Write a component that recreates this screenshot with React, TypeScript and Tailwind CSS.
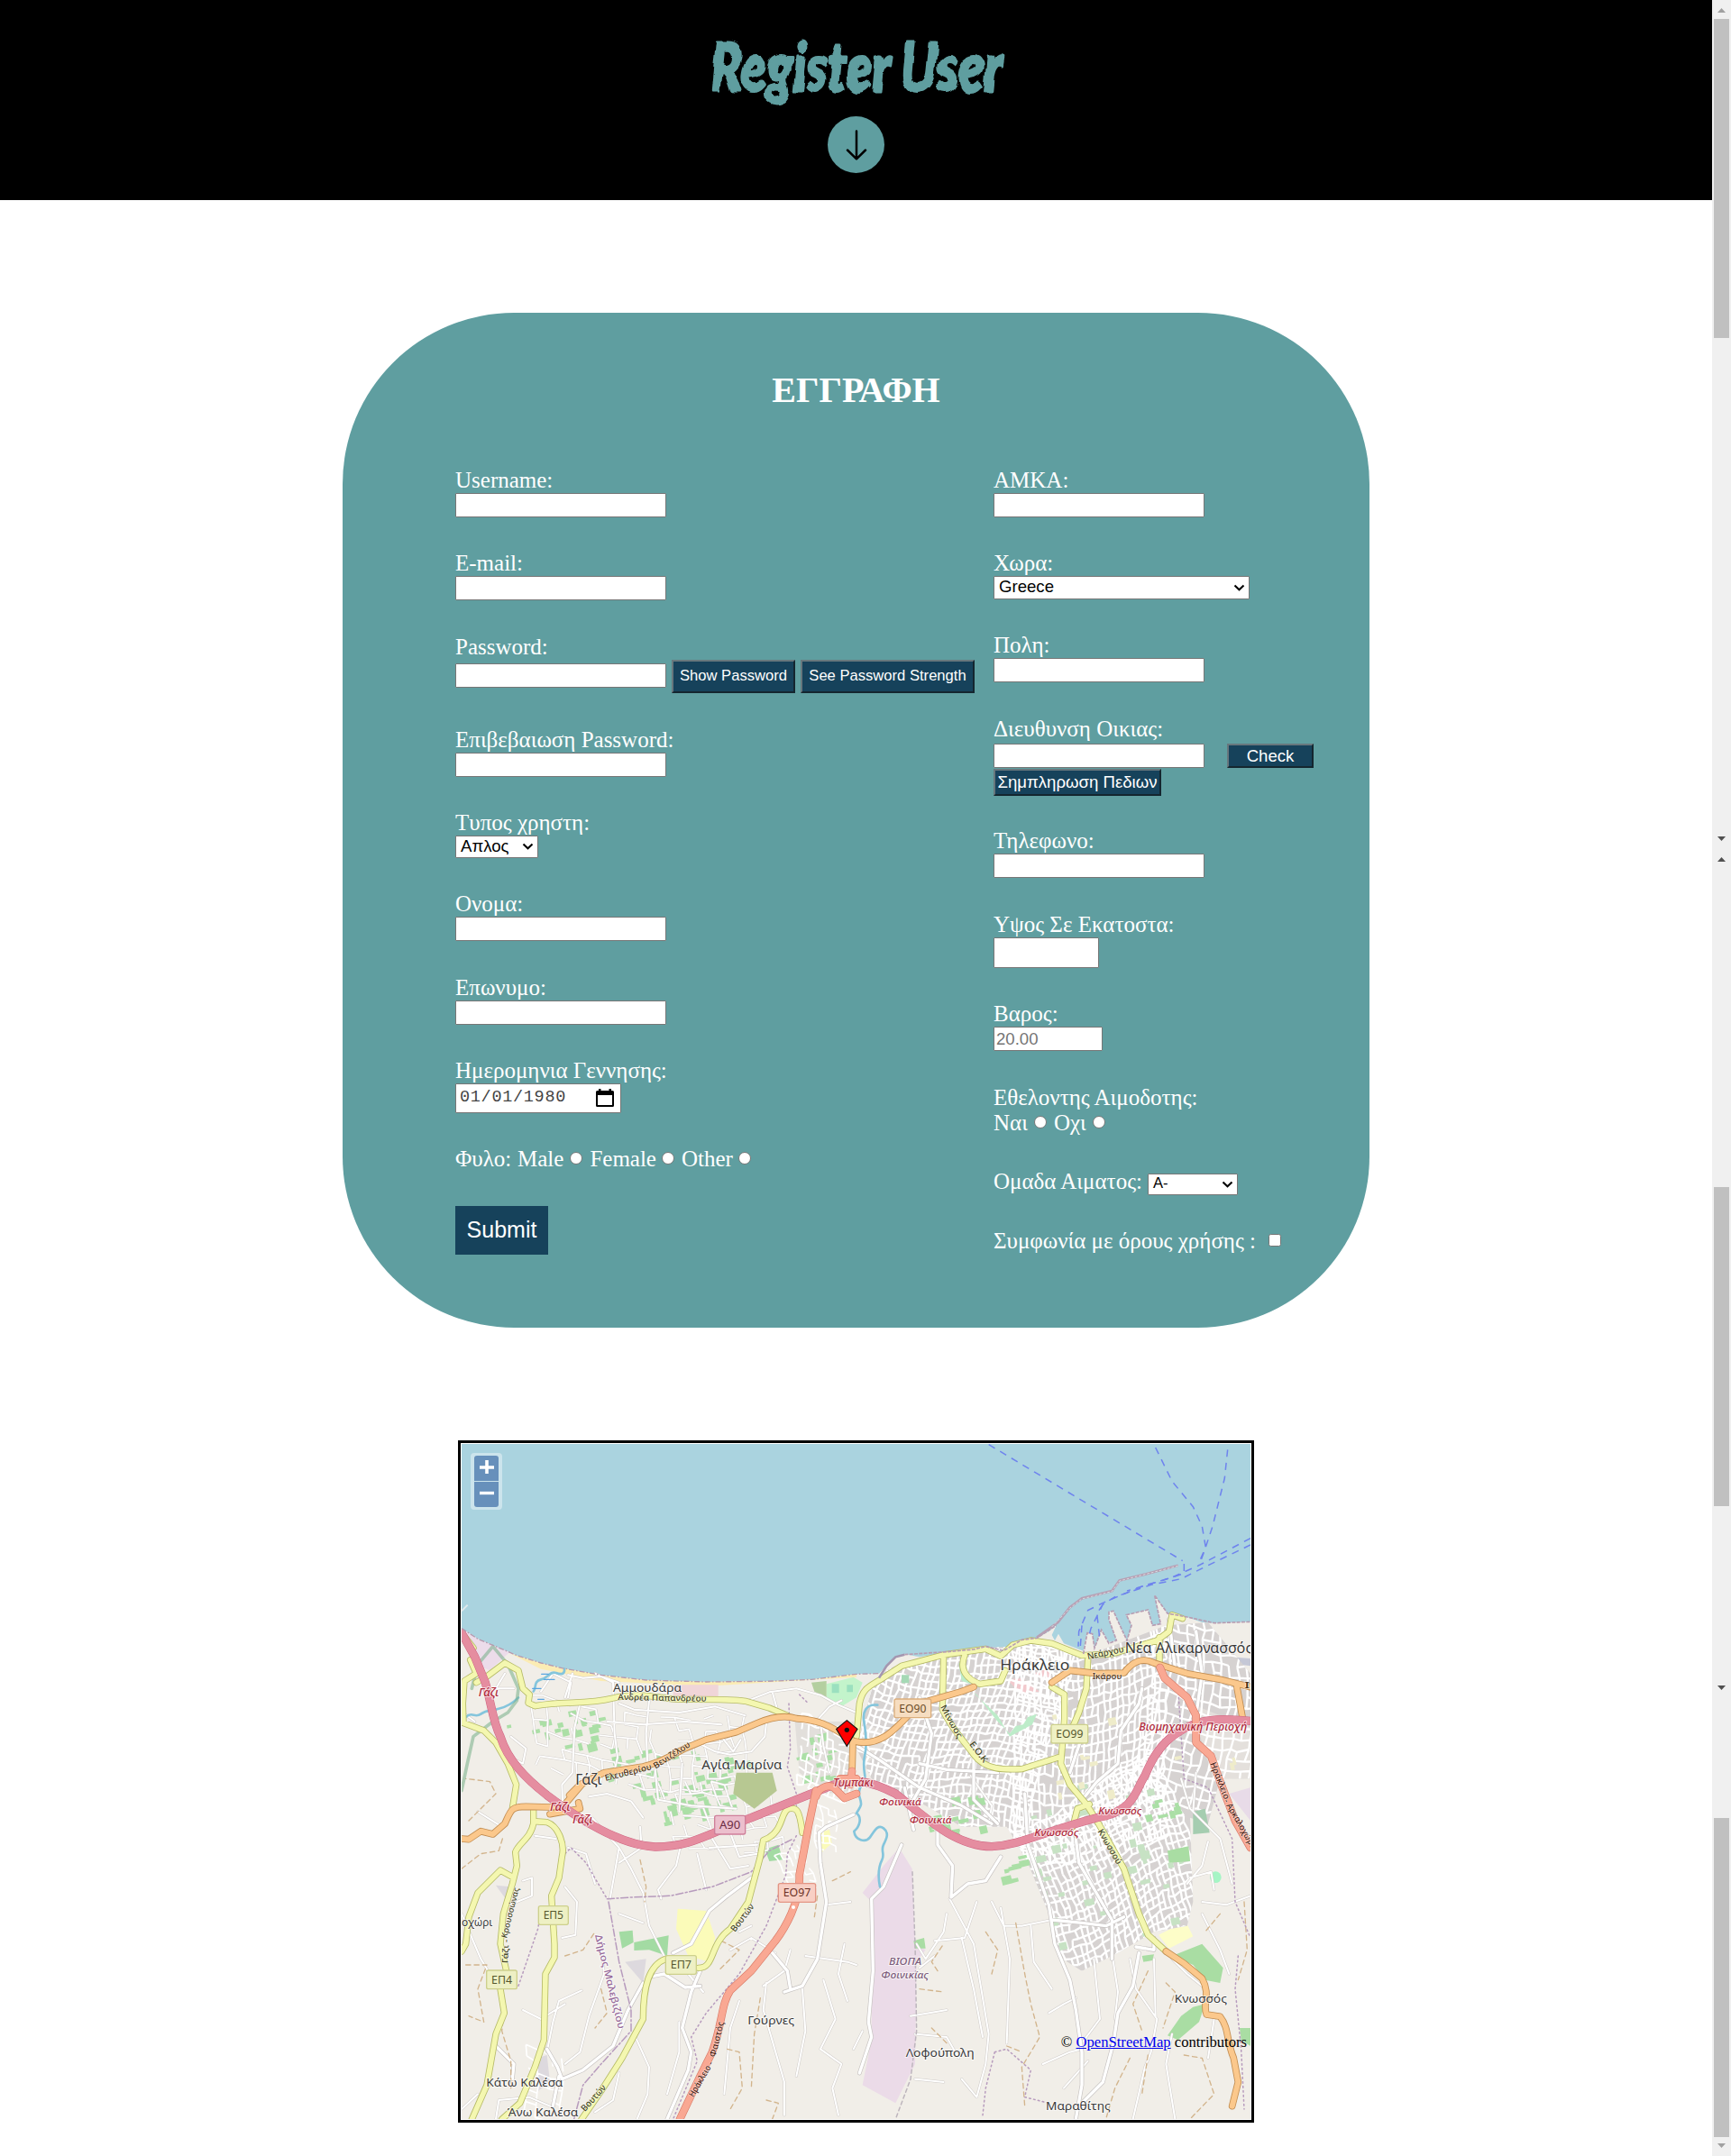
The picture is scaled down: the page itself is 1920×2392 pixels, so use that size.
import React from 'react';

/* ---------- form controls ---------- */

const Label = ({ children }: { children: React.ReactNode }) => (
  <label className="block h-7 whitespace-pre text-[25px] leading-7 text-white">{children}</label>
);

const TextBox = ({ size = 'h-[27px] w-[234px]', placeholder = '' }: { size?: string; placeholder?: string }) => (
  <input
    placeholder={placeholder}
    className={`block shrink-0 rounded-[1px] border border-[#767676] bg-white px-[2px] font-['Liberation_Sans',sans-serif] text-[18.6px] text-black outline-none placeholder:text-[#757575] placeholder:opacity-100 ${size}`}
  />
);

const SelectBox = ({ value, size }: { value: string; size: string }) => (
  <button
    type="button"
    aria-haspopup="listbox"
    className={`flex shrink-0 items-center justify-between rounded-[1px] border border-[#767676] bg-white pr-[4px] pl-[5px] font-['Liberation_Sans',sans-serif] text-black ${size}`}
  >
    <span className="-mt-[2px] leading-[22px] whitespace-nowrap">{value}</span>
    <svg className="h-[9px] w-[13px] shrink-0" viewBox="0 0 13 9" fill="none">
      <path d="M1.5 1.5 6.5 6.3 11.5 1.5" stroke="#000" strokeWidth="2.1" />
    </svg>
  </button>
);

const NavyButton = ({ children, size }: { children: React.ReactNode; size: string }) => (
  <button
    className={`flex shrink-0 items-center justify-center border-2 border-t-[#67777d] border-r-[#14262f] border-b-[#14262f] border-l-[#67777d] bg-[#16425b] font-['Liberation_Sans',sans-serif] whitespace-nowrap text-white ${size}`}
  >
    {children}
  </button>
);

const Radio = ({ name, gap }: { name: string; gap: string }) => (
  <input
    type="radio"
    name={name}
    className={`block h-[14px] w-[14px] shrink-0 appearance-none rounded-full border border-[#767676] bg-white ${gap}`}
  />
);

/* ---------- map helpers ---------- */

function makeRandom(seed: number) {
  let s = seed;
  return () => {
    s = (s * 16807) % 2147483647;
    return s / 2147483647;
  };
}

/* Jittered street grid around a centre point, turned by an angle. */
function streets(cx: number, cy: number, w: number, h: number, deg: number, sx: number, sy: number, seed: number, drop: number) {
  const rnd = makeRandom(seed);
  const a = (deg * Math.PI) / 180;
  const cols = Math.round(w / sx);
  const rows = Math.round(h / sy);
  const pt: string[][] = [];
  for (let r = 0; r <= rows; r++) {
    pt.push([]);
    for (let c = 0; c <= cols; c++) {
      const x = -w / 2 + c * sx + (rnd() - 0.5) * sx * 0.4 + Math.sin(r / 5) * sx * 0.9;
      const y = -h / 2 + r * sy + (rnd() - 0.5) * sy * 0.4 + Math.sin(c / 6) * sy * 1.3;
      pt[r].push(`${(cx + x * Math.cos(a) - y * Math.sin(a)).toFixed(0)} ${(cy + x * Math.sin(a) + y * Math.cos(a)).toFixed(0)}`);
    }
  }
  let d = '';
  for (let r = 0; r <= rows; r++) {
    for (let c = 0; c <= cols; c++) {
      if (c < cols && rnd() > drop) d += `M${pt[r][c]}L${pt[r][c + 1]}`;
      if (r < rows && rnd() > drop) d += `M${pt[r][c]}L${pt[r + 1][c]}`;
    }
  }
  return d;
}

function patches(x0: number, y0: number, w: number, h: number, n: number, seed: number) {
  const rnd = makeRandom(seed);
  let d = '';
  for (let i = 0; i < n; i++) {
    const x = x0 + rnd() * w;
    const y = y0 + rnd() * h;
    const a = 10 + rnd() * 24;
    const b = 8 + rnd() * 20;
    d += `M${x.toFixed(0)} ${y.toFixed(0)}l${a.toFixed(0)} ${(-a / 5).toFixed(0)} ${(b / 4).toFixed(0)} ${b.toFixed(0)} ${(-a).toFixed(0)} ${(a / 4).toFixed(0)}z`;
  }
  return d;
}

const LAND =
  'M36 650 90 685 150 710 220 740 300 765 370 782 500 805 650 822 850 828 1050 826 1200 820 1350 802 1425 800 1450 775 1480 745 1510 735 1560 745 1650 730 1700 718 1740 722 1780 710 1840 724 1860 700 1900 688 1950 682 1990 660 2015 640 2000 672 2010 690 2022 668 2040 700 2105 725 2118 665 2135 668 2142 715 2165 655 2190 695 2215 690 2190 620 2190 595 2205 592 2222 630 2250 690 2265 640 2248 605 2320 588 2335 640 2362 635 2342 540 2385 600 2450 612 2500 630 2540 632 2661 628 2661 2284 36 2284Z';

const CITY =
  'M1400 850 1450 790 1500 765 1640 735 1780 715 1860 710 1950 690 2105 745 2380 640 2520 630 2661 800 2661 1150 2560 1150 2520 1300 2460 1280 2470 1560 2450 1640 2340 1660 2220 1730 2100 1790 2020 1740 1990 1600 1920 1430 1850 1310 1700 1310 1580 1240 1400 1150 1350 1050Z';

const MINOR = [
  'M480 800 540 830 545 1000 555 1080 545 1120M660 890 650 1000 655 1100M430 900 412 980 405 1130 370 1170 372 1230',
  'M405 800 380 880M390 805 440 815 500 810 560 830M300 860 340 800 400 830 390 880M560 900 610 920 760 930 880 910 980 940M520 960 640 970 780 960 900 970',
  'M990 890 1060 862 1150 850 1230 872 1290 905 1350 930M1070 862 1085 915M1230 965 1240 1040 1260 1130M1215 960 1260 910 1300 890',
  'M830 1035 880 1060 930 1070 1000 1060 1045 1010 1050 965M900 1010 940 1060 965 1020M770 1100 760 1260M680 1120 690 1220 800 1240 950 1250',
  'M460 1210 520 1200 600 1225 640 1280M470 1280 560 1380 600 1450 640 1530 660 1640 710 1740M560 1380 530 1550M630 1310 635 1380 560 1430',
  'M40 930 80 960M180 800 150 850 210 850M200 1080 240 1100 250 1050 200 1010M90 1260 170 1310M280 1340 350 1350M390 1380 450 1400 480 1500M380 1510 420 1560 415 1670 370 1680',
  'M820 1400 850 1520M770 1350 750 1440 690 1520 700 1550M870 1350 930 1450 990 1440M930 1330 960 1410 1020 1400M860 1380 1020 1370',
  'M36 1600 70 1680 100 1750 130 1800M240 1490 270 1480 270 1540 220 1560M500 1700 510 1800 460 1940 430 2060 380 2100M435 1855 360 1890 340 1960 320 2060M240 1920 300 1950 380 1900M560 1600 640 1630',
  'M610 2000 660 2110 655 2200 620 2283M560 2130 540 2220 480 2260M790 1800 840 1860M760 1960 760 2060 720 2200M1000 1640 960 1660M930 1720 1000 1680 1080 1730M1040 1840 1110 1790 1130 1720',
  'M960 1890 930 1980 910 2200M1050 1830 1040 1920 1110 2160 1110 2270M1170 1850 1180 1990 1150 2140M1240 1820 1280 1950 1230 2050 1300 2100 1270 2180 1290 2270M1310 1700 1290 1800 1320 1890M1180 1740 1320 1760 1350 1770M1250 1570 1330 1560',
  'M1550 1700 1580 1750 1640 1660 1650 1600M1610 1690 1710 1680 1750 1560M1700 1680 1740 1850 1770 2010M1800 1560 1840 1640 1900 1640 2000 1620M1830 1580 1860 1750 1850 2030M1930 1640 1940 1760 2000 1850M1990 1930 2040 1900 2080 1880',
  'M1660 1550 1740 1700 1790 2000 1780 2100 1750 2210 1700 2150M1545 2000 1650 2010 1690 2080M1610 1740 1560 1780M1370 1990 1340 2050M1530 1940 1650 1920M1545 2150 1640 2160M2140 1750 2160 1950 2100 2030',
  'M2200 1730 2220 1860 2210 1950M2260 1750 2280 1850 2350 1950 2330 2060 2310 2110 2270 2283M2340 1750 2345 1940M2400 1750 2450 1800 2500 1840M2500 1600 2560 1720 2590 1800M2540 1950 2520 2080M2400 2000 2380 2100 2410 2283M1970 2100 2060 2060 2100 2050M2040 2180 2120 2090',
  'M1730 1140 1800 1240 1790 1300M2480 1130 2470 1260M2430 1150 2460 1250 2560 1350 2600 1500M2520 1360 2500 1440 2450 1500M2460 1480 2530 1460 2540 1520M2661 1540 2580 1570 2500 1560M36 2250 90 2200M150 2283 160 2220 260 2210 330 2240',
];

const MAJOR_WHITE = [
  'M830 1790 800 1860 770 1980 800 2060 790 2120 720 2283M660 1810 710 1800 780 1845 830 1840M740 1730 800 1700 860 1590 920 1540 1000 1480M320 2050 355 2110 370 2150 440 2120 540 2040 590 1920 640 1830',
  'M1340 1270 1250 1310 1225 1330 1230 1430 1250 1560 1220 1750 1170 1840 1110 1860M1070 1730 1120 1790 1130 1850M150 2040 210 2100 205 2150M360 2140 340 2240',
  'M1500 1370 1440 1510 1400 1550 1405 1790 1390 1960 1400 2010 1360 2130M1620 1320 1620 1370 1670 1440 1665 1540M1665 1545 1720 1500 1780 1490 1830 1410M1540 1320 1510 1180',
  'M1910 1200 1920 1370 1990 1570 2010 1700 2060 1820 2080 1920 2100 2060 2100 2170 2080 2283M2290 1730 2270 1840 2220 1930 2205 2030 2170 2160 2080 2250M2080 1350 2090 1430 2200 1620 2200 1750',
  'M1350 1040 1430 1090 1560 1180 1700 1240 1800 1300M1560 880 1600 1000 1580 1150 1540 1220M1740 1080 1740 1220 1820 1300M1560 1100 1650 1120 1820 1130M2100 1010 2060 1130M2300 850 2290 900 2230 990 2220 1100 2150 1160 2110 1210M2000 1620 2100 1630 2180 1640 2240 1610M2280 1710 2340 1720 2340 1680M2390 620 2410 780M2480 660 2500 800 2480 940',
];

const YELLOW = [
  'M40 670 75 715M65 755 85 800 45 825 40 900 42 965 70 975 110 990 150 1030 190 1100 218 1170 205 1250',
  'M85 830 120 810 180 765 225 790 240 850 262 870 258 898 280 908 M280 908C380 890 450 905 540 882S700 885 760 886 920 884 980 892L1060 915 1120 940',
  'M275 1250 275 1300C265 1350 225 1365 215 1395L220 1440 205 1500 175 1600 165 1700 185 1790 165 1850 178 1930 150 2000 120 2170 70 2284',
  'M210 1480 165 1455 90 1530 60 1610 50 1700 36 1725',
  'M275 1292 320 1295C360 1310 380 1370 370 1410L360 1480 335 1540 345 1700 345 1745 315 1800 310 2020 280 2110 230 2230 170 2284',
  'M1170 1330C1160 1250 1150 1245 1125 1250 1095 1260 1110 1330 1040 1355L1030 1410 990 1560 930 1650C860 1700 880 1780 825 1780M715 1750C660 1770 640 1840 640 1950L570 2080 500 2190 435 2284',
  'M1350 1010 1360 900C1370 850 1390 845 1430 820L1500 775 1640 738 1780 718 1830 742 1870 705 1930 690 2000 700 2100 740 2200 735 2350 690 2390 660 2400 605 2435 617',
  'M1640 740 1636 920C1670 990 1720 1040 1740 1070 1780 1125 1850 1120 1900 1118L2020 1080',
  'M1710 740C1690 790 1720 820 1760 835L1830 825 1845 790',
  'M2000 845 2042 870 2042 950 2030 1100 2060 1170 2115 1235 2150 1290 2240 1450 2290 1600 2320 1670 2380 1725',
  'M2120 755 2115 850 2090 930 2060 1000M2125 1235 2085 1250 2070 1310M2358 680 2358 780',
];

const ORANGE = [
  'M395 1205 430 1170 510 1130 640 1110C720 1090 740 1065 790 1045L850 1020 950 995 1020 965C1080 940 1120 940 1150 950 1220 955 1250 965 1340 1025 1440 1050 1490 970 1560 900L1700 860 1740 845',
  'M2000 830 2060 790 2150 800 2240 798C2270 760 2300 745 2340 765L2450 800 2560 820 2661 845M2615 840 2635 950',
  'M36 1350 60 1352 100 1325 140 1335 180 1300C200 1255 200 1243 250 1243L330 1245 380 1235 440 1165M330 1268 430 1250 425 1230',
  'M1338 1025 1335 1140M2380 1725 2440 1765 2500 1815C2530 1870 2500 1900 2515 1935L2560 1942C2590 1980 2580 2020 2605 2080L2620 2160 2600 2240',
];

const TRUNK = [
  'M1215 1190 1190 1310 1160 1470C1165 1560 1110 1650 1080 1690L1000 1790 930 1855C900 1900 905 1960 870 2060L830 2140 762 2284',
  'M2360 780 2375 815 2450 880 2480 940 2480 1030 2530 1075 2560 1160 2610 1290 2661 1380',
  'M1335 1125 1330 1170M1215 1210C1225 1175 1260 1170 1275 1180L1310 1215 1350 1200M1295 1150 1350 1150',
];

const MOTORWAY =
  'M36 665 80 745 115 830C135 900 140 960 165 1010 190 1090 250 1150 320 1205 420 1280 560 1372 680 1377 800 1378 850 1335 1000 1280 1100 1240 1200 1200 1270 1172 1340 1145 1400 1160 1480 1200 1580 1280 1680 1376 1800 1376 1900 1370 1960 1330 2150 1280 2280 1260 2280 1180 2310 1140 2350 1040 2400 1000 2470 970 2520 950 2570 950 2661 958';

type TextProps = {
  x: number;
  y: number;
  w: number;
  size?: number;
  rot?: number;
  fill?: string;
  italic?: boolean;
  children: string;
};

const MapText = ({ x, y, w, size = 42, rot = 0, fill = '#3a3a3a', italic = false, children }: TextProps) => (
  <text
    x={x}
    y={y}
    transform={`rotate(${rot} ${x} ${y})`}
    textLength={w}
    lengthAdjust="spacingAndGlyphs"
    fontSize={size}
    fontWeight={size < 33 || italic ? 500 : 400}
    fontStyle={italic ? 'italic' : 'normal'}
    fill={fill}
    stroke="#fff"
    strokeOpacity="0.65"
    strokeWidth={size < 31 ? 3 : 6}
    strokeLinejoin="round"
    paintOrder="stroke"
  >
    {children}
  </text>
);

const RoadBadge = ({ x, y, w, bg, line, ink, children }: { x: number; y: number; w: number; bg: string; line: string; ink: string; children: string }) => (
  <g>
    <rect x={x} y={y} width={w} height="62" rx="6" fill={bg} stroke={line} strokeWidth="4" />
    <text x={x + 16} y={y + 44} textLength={w - 32} lengthAdjust="spacingAndGlyphs" fontSize="38" fill={ink}>
      {children}
    </text>
  </g>
);

const RED = '#b02a3c';

const CityMap = () => (
  <svg className="block h-[749px] w-[875px]" viewBox="36 36 2625 2247" preserveAspectRatio="none" fontFamily="'Noto Sans', sans-serif">
    <defs>
      <clipPath id="city"><path d={CITY} /></clipPath>
      <clipPath id="land"><path d={LAND} /></clipPath>
    </defs>
    <rect x="36" y="36" width="2625" height="2248" fill="#aad3df" />
    <path d={LAND} fill="#f1eee8" />
    <path d="M36 592 56 572" stroke="#dfe9ec" strokeWidth="6" />

    <g clipPath="url(#land)">
      <path d="M36 650 200 725 130 790 80 770Z" fill="#ecdcea" />
      <path d="M200 735 500 805 850 828 1350 802 1350 812 850 842 500 825 300 785Z" fill="#fbecb4" />
      <path d="M740 838H890V880H740Z" fill="#f0d5d8" />
      <path d="M1250 835 1340 812 1370 830 1350 880 1300 910 1250 880Z" fill="#c3f4cb" />
      <path d="M1268 835H1292V865H1268ZM1318 838H1338V862H1318Z" fill="#9be0bf" />
      <path d="M1200 830 1250 825 1250 880 1210 860Z" fill="#b4cfa0" />
      <path d="M1090 1370 1105 1420 1060 1425 1045 1385ZM560 1660 605 1655 608 1695 570 1715ZM610 1695 725 1672 720 1740 660 1720 610 1722Z" fill="#a3dba3" />
      <path d="M755 1583 850 1590 880 1680 860 1760 790 1740 750 1650ZM1225 1330 1260 1320 1268 1365 1235 1395Z" fill="#fbfbb9" />
      <path d="M2355 1670 2445 1625 2470 1675 2390 1715ZM1420 1740H1450V1750H1420Z" fill="#fdfdc8" />
      <path d="M1492 1380 1535 1450 1545 1700 1580 1720 1550 1760 1545 2100 1480 2230 1370 2170 1400 2020 1400 1560 1370 1530 1440 1440Z" fill="#ebdbe8" />
      <path d="M2530 770 2661 800 2661 860 2560 830ZM2590 1200 2661 1180 2661 1290Z" fill="#e8dbe8" />
      <path d="M2530 740 2661 750 2661 775 2540 760Z" fill="#c5c8d6" />
      <path d="M2620 860 2661 850 2661 960H2640Z" fill="#f3dcd2" />
      <path d="M150 1505 200 1510 190 1560ZM580 1760 650 1750 640 1830ZM290 2080 320 2070 330 2160 290 2190Z" fill="#ddd9de" />
    </g>

    <path d={CITY} fill="#d6d2d1" />
    <g clipPath="url(#city)">
      <path d="M2460 900 2540 1160 2661 1150V980ZM1350 960 1470 1000 1380 1110Z" fill="#e4e0dc" />
      <path d="M1850 820 1910 815 1900 870ZM1905 825 1960 860 1900 865ZM1940 800 1990 780 2000 820Z" fill="#f2c9cd" />
      <g stroke="#fff" fill="none">
        <path d={streets(1650, 1000, 700, 900, 12, 21, 26, 17, 0.08)} strokeWidth="7" />
        <path d={streets(2120, 950, 500, 860, -4, 21, 32, 23, 0.1)} strokeWidth="7" />
        <path d={streets(2500, 900, 400, 640, 6, 29, 35, 29, 0.12)} strokeWidth="7" />
        <path d={streets(2170, 1520, 640, 640, -22, 20, 27, 41, 0.08)} strokeWidth="7" />
      </g>
      <path d="M1690 765 1715 775 1730 835 1700 825ZM1740 865 1820 940 1860 1010 1935 970 1950 935 1920 945 1905 970 1880 975 1860 1000 1815 955 1750 870Z" fill="#bdecc9" />
      <path d="M1500 805H1525V832H1500Z" fill="#a5d9b5" />
      <path d={patches(1900, 1150, 520, 600, 36, 5)} fill="#c7e2c4" />
      <path d={patches(2000, 900, 600, 300, 14, 77)} fill="#efecca" />
    </g>
    <path d="M1145 960 1340 960 1340 1190 1250 1200 1160 1130Z" fill="#dcd8d6" opacity="0.7" />
    <path d={patches(160, 920, 330, 130, 26, 7) + patches(650, 1050, 330, 210, 50, 3) + patches(520, 1050, 120, 180, 14, 19) + patches(700, 1190, 150, 110, 20, 31) + patches(1150, 1000, 110, 180, 14, 11)} fill="#abdfa6" />
    <path d={patches(1590, 1200, 180, 130, 14, 13) + patches(1830, 1400, 80, 90, 8, 37) + patches(2310, 1220, 110, 80, 9, 43)} fill="#abdfa6" />
    <path d="M2385 1390 2455 1375 2460 1425 2390 1430ZM1540 1690 1575 1680 1580 1715 1545 1715ZM2400 1740 2500 1700 2570 1780 2560 1830 2510 1820 2470 1770ZM2470 1910 2510 1900 2490 1960 2420 2020 2385 2005 2430 1940ZM2300 1740 2340 1735 2335 1755 2305 1760ZM2625 1980H2661V2040L2630 2020Z" fill="#a9dda3" />
    <path d="M2470 1260 2510 1250 2525 1330 2470 1335Z" fill="#a5cdb0" />
    <circle cx="2545" cy="1478" r="19" fill="#a5f5c5" />

    <g clipPath="url(#land)" stroke="#fff" fill="none">
      <path d={streets(620, 1010, 720, 240, 4, 44, 40, 53, 0.42)} stroke="#d2cecb" strokeWidth="8" />
      <path d={streets(620, 1010, 720, 240, 4, 44, 40, 53, 0.42)} strokeWidth="5" />
      <path d={streets(1240, 1060, 180, 230, 10, 22, 26, 59, 0.3)} strokeWidth="6" />
      <path d={streets(880, 1240, 360, 210, -6, 44, 38, 61, 0.45)} stroke="#d2cecb" strokeWidth="8" />
      <path d={streets(880, 1240, 360, 210, -6, 44, 38, 61, 0.45)} strokeWidth="5" />
      <path d={streets(1130, 1440, 90, 150, -20, 22, 22, 67, 0.5)} strokeWidth="5" />
      <path d={streets(300, 2150, 130, 200, 12, 40, 36, 71, 0.45)} strokeWidth="5" />
      <path d={streets(1240, 1310, 80, 150, 5, 24, 24, 73, 0.35)} strokeWidth="5" />
    </g>
    <path d="M950 1130 1070 1130 1085 1190 1010 1250 940 1200Z" fill="#b7c892" />

    <g fill="none" strokeLinejoin="round" strokeLinecap="round">
      <path d={MINOR.join('')} stroke="#cfcbc8" strokeWidth="9" />
      <path d={MINOR.join('')} stroke="#fff" strokeWidth="6" />
      <path d={MAJOR_WHITE.join('')} stroke="#c6c2c0" strokeWidth="14" />
      <path d={MAJOR_WHITE.join('')} stroke="#fff" strokeWidth="10" />
      <g stroke="#d2b48c" strokeWidth="4" strokeDasharray="16 12">
        <path d="M36 1450 100 1400 160 1390 175 1340M60 1290 150 1200 130 1160 50 1150M50 1770 120 1770 90 1850 110 1960 60 1940M180 1900 170 1990 200 2090 200 2180M380 1740 440 1720 480 1660M500 1850 520 1930 480 1980" />
        <path d="M630 1420 650 1510 645 1560M900 1690 960 1720 890 1790M1220 1540 1210 1610M1270 1490 1330 1460M1030 1880 1010 2000 1000 2180M920 2050 960 2060 970 2180 930 2250M1050 2220 1090 2230 1070 2283" />
        <path d="M1880 1630 1910 1800 1930 1900 1960 2010 1900 2110 1910 2240M1780 1660 1820 1720 1800 1800M1620 1790 1600 1760 1640 1700M1560 1850 1640 1860M2320 1790 2270 1900 2300 1990M2380 1830 2410 1860 2370 1980M2260 2080 2210 2180 2180 2283M2440 2070 2500 2080 2540 2200 2460 2283M2560 1600 2510 1660M2640 1560 2650 1720 2620 1820M2320 2070 2300 2200M1650 2030 1600 1980M1850 2040 1900 2060" />
      </g>
      <g stroke="#b79bbd" strokeWidth="4.5">
        <path d="M520 1550 600 1545 730 1540 870 1510 1000 1460 1060 1390 1140 1350" strokeDasharray="24 8 6 8" />
        <path d="M525 1560 560 1760 600 1920 600 1990 500 2100 440 2170 410 2283" strokeDasharray="24 8 6 8" />
        <path d="M370 1410 400 1380 450 1430 520 1550M225 1840 290 1650 300 1590M1150 1340 1120 1400 1115 1470 1050 1640 960 1800 850 1930 800 2010 820 2090 740 2283M1125 900 1130 1050 1120 1110 1150 1200 1150 1280M1160 870 1190 900" strokeDasharray="5 10" />
        <path d="M2420 850 2440 1150 2520 1180 2600 1350 2610 1560 2661 1680M2620 1740 2610 1850 2630 2050 2640 2250M1810 2060 1780 2180 1770 2270M1810 2060 1850 2050 1930 2120 1910 2210 1990 2230" strokeDasharray="5 10" />
        <path d="M1536 1460 1545 1700 1550 1990 1530 2150 1480 2283" stroke="#bdb5bd" strokeDasharray="12 10" />
      </g>
      <g stroke="#84c5dc" strokeWidth="8">
        <path d="M50 945C70 925 80 950 100 935S135 925 150 920 190 915 225 880M275 860C285 850 275 825 300 820S330 790 350 798 380 800 378 785" />
        <path d="M1420 905C1380 900 1370 930 1375 960S1385 1040 1378 1070 1375 1120 1378 1140 1350 1180 1360 1210 1365 1240 1350 1265C1370 1280 1360 1310 1342 1325 1345 1355 1380 1365 1395 1345S1420 1300 1440 1315 1450 1350 1440 1370 1445 1400 1435 1420 1420 1470 1428 1510" />
        <path d="M302 802H325M310 820H345M272 850H300M290 886H310" stroke="#5aa5e0" strokeWidth="4" />
      </g>
      <path d="M140 710 90 770 70 850M140 710 190 770 225 850 220 890 190 930 140 960 75 1010 55 1100 36 1190" stroke="#74ae86" strokeOpacity="0.55" strokeWidth="11" />

      <path d={YELLOW.join('')} stroke="#b5ba66" strokeWidth="22" />
      <path d={YELLOW.join('')} stroke="#f4f7b0" strokeWidth="17" />
      <path d={ORANGE.join('')} stroke="#c28d51" strokeWidth="23" />
      <path d={ORANGE.join('')} stroke="#fbc88c" strokeWidth="18" />
      <path d={MOTORWAY} stroke="#cf6480" strokeWidth="28" />
      <path d={MOTORWAY} stroke="#e58da0" strokeWidth="25" />
      <path d={TRUNK.join('')} stroke="#d97b68" strokeWidth="26" />
      <path d={TRUNK.join('')} stroke="#f9a893" strokeWidth="22" />
      <circle cx="1140" cy="1578" r="6" fill="#fff" />
    </g>

    <g fill="none">
      <path d="M36 650 90 685 150 710 220 740 300 765 370 782 500 805 650 822 850 828 1050 826 1200 820 1350 802 1425 800" stroke="#b69aae" strokeWidth="4" strokeDasharray="18 6 5 6" />
      <path d="M1425 815 1450 775 1480 745 1510 737" stroke="#a497b0" strokeWidth="8" />
      <path d="M1510 737 1650 728 1740 720 1780 710 1840 724 1900 688 1950 682 2015 640M2105 735 2118 665 2135 668 2142 715 2165 655 2190 700 2215 690 2190 620 2190 595 2205 592 2222 630 2250 690 2265 640 2248 605 2320 588 2335 640 2362 635 2342 540 2385 600 2450 612 2540 632 2661 628" stroke="#b79db2" strokeWidth="5" strokeDasharray="12 4" />
      <path d="M1950 680 2020 630 2060 580 2100 550 2200 525 2225 490 2310 470 2420 440" stroke="#b7a0b4" strokeWidth="8" />
      <path d="M2000 645 2060 582 2100 552 2200 527 2225 492 2420 442" stroke="#d7dbe0" strokeWidth="3" strokeDasharray="8 6" />
      <g stroke="#6e83ee" strokeWidth="4.5" strokeDasharray="24 20">
        <path d="M1790 38 2435 425M2345 48 2400 160 2470 245 2500 310 2512 380 2490 430M2585 55 2575 150 2535 310 2505 400 2490 440M2661 350 2490 440 2400 480 2300 510 2170 565 2120 590 2090 660 2088 710" />
        <path d="M2661 372 2520 440 2430 485 2330 505 2210 545 2170 570 2130 650 2125 670M2170 570 2150 600 2160 690M2440 435V465M2100 640 2095 710M2430 470 2370 490 2250 525" />
      </g>
    </g>

    <MapText x={540} y={861} w={228} size={38}>Αμμουδάρα</MapText>
    <MapText x={556} y={888} w={295} size={28} rot={1} fill="#44451d">Ανδρέα Παπανδρέου</MapText>
    <MapText x={835} y={1120} w={267} size={42}>Αγία Μαρίνα</MapText>
    <MapText x={415} y={1170} w={88} size={46}>Γάζι</MapText>
    <MapText x={515} y={1158} w={160} size={29} rot={-14} fill="#4b2f10">Ελευθερίου</MapText>
    <MapText x={682} y={1118} w={140} size={29} rot={-33} fill="#4b2f10">Βενιζέλου</MapText>
    <MapText x={92} y={877} w={68} size={36} italic fill={RED}>Γάζι</MapText>
    <MapText x={330} y={1258} w={68} size={36} italic fill={RED}>Γάζι</MapText>
    <MapText x={405} y={1299} w={68} size={36} italic fill={RED}>Γάζι</MapText>
    <MapText x={1828} y={788} w={231} size={46}>Ηράκλειο</MapText>
    <MapText x={2243} y={732} w={425} size={46}>Νέα Αλικαρνασσός</MapText>
    <MapText x={2120} y={754} w={124} size={30} rot={-12} fill="#44451d">Νεάρχου</MapText>
    <MapText x={2135} y={818} w={98} size={29} fill="#4b2f10">Ικάρου</MapText>
    <MapText x={2640} y={849} w={50} size={29} fill="#4b2f10">Ικ</MapText>
    <MapText x={1628} y={911} w={122} size={29} rot={61} fill="#44451d">Μίνωος</MapText>
    <MapText x={1724} y={1036} w={80} size={30} rot={52} fill="#44451d">Ε.Ο.Κ</MapText>
    <MapText x={2290} y={989} w={360} size={36} italic fill={RED}>Βιομηχανική Περιοχή</MapText>
    <MapText x={1272} y={1175} w={135} size={36} italic fill={RED}>Τυμπάκι</MapText>
    <MapText x={1425} y={1238} w={141} size={34} italic fill={RED}>Φοινικιά</MapText>
    <MapText x={1526} y={1300} w={141} size={34} italic fill={RED}>Φοινικιά</MapText>
    <MapText x={1942} y={1340} w={148} size={34} italic fill={RED}>Κνωσσός</MapText>
    <MapText x={2155} y={1270} w={145} size={34} italic fill={RED}>Κνωσσός</MapText>
    <MapText x={2152} y={1325} w={130} size={29} rot={60} fill="#44451d">Κνωσσού</MapText>
    <MapText x={2526} y={1100} w={130} size={29} rot={68} fill="#4b1b10">Ηράκλειο</MapText>
    <MapText x={2572} y={1225} w={180} size={29} rot={60} fill="#4b1b10">- Αρκαλοχώρι</MapText>
    <MapText x={36} y={1640} w={103} size={38}>οχώρι</MapText>
    <MapText x={190} y={1765} w={80} size={27} rot={-88} fill="#44451d">Γάζι -</MapText>
    <MapText x={186} y={1682} w={172} size={27} rot={-76} fill="#44451d">Κρουσσώνας</MapText>
    <MapText x={480} y={1672} w={322} size={32} rot={76} fill="#96699a">Δήμος Μαλεβιζίου</MapText>
    <MapText x={946} y={1662} w={108} size={30} rot={-53} fill="#44451d">Βουτών</MapText>
    <MapText x={446} y={2260} w={108} size={30} rot={-48} fill="#44451d">Βουτών</MapText>
    <MapText x={808} y={2212} w={132} size={29} rot={-60} fill="#4b1b10">Ηράκλειο -</MapText>
    <MapText x={880} y={2078} w={120} size={29} rot={-76} fill="#4b1b10">Φαιστός</MapText>
    <MapText x={988} y={1968} w={155} size={38}>Γούρνες</MapText>
    <MapText x={118} y={2174} w={255} size={38}>Κάτω Καλέσα</MapText>
    <MapText x={188} y={2275} w={236} size={38}>Άνω Καλέσα</MapText>
    <MapText x={1458} y={1771} w={108} size={34} italic fill="#7d5d7b">ΒΙΟΠΑ</MapText>
    <MapText x={1432} y={1816} w={158} size={34} italic fill="#7d5d7b">Φοινικίας</MapText>
    <MapText x={1514} y={2076} w={228} size={38}>Λοφούπολη</MapText>
    <MapText x={2408} y={1896} w={175} size={38}>Κνωσσός</MapText>
    <MapText x={1980} y={2253} w={215} size={38}>Μαραθίτης</MapText>

    <RoadBadge x={1476} y={885} w={122} bg="#f6ddc0" line="#dcae7c" ink="#6b4c28">ΕΟ90</RoadBadge>
    <RoadBadge x={1998} y={970} w={122} bg="#eff1c4" line="#cdd08c" ink="#55572d">ΕΟ99</RoadBadge>
    <RoadBadge x={878} y={1273} w={102} bg="#ecbfcd" line="#cf7f9a" ink="#6b2b42">Α90</RoadBadge>
    <RoadBadge x={1090} y={1499} w={124} bg="#f8cfc4" line="#e39584" ink="#6b3024">ΕΟ97</RoadBadge>
    <RoadBadge x={292} y={1574} w={99} bg="#eef0c4" line="#cdd08c" ink="#55572d">ΕΠ5</RoadBadge>
    <RoadBadge x={119} y={1788} w={101} bg="#eef0c4" line="#cdd08c" ink="#55572d">ΕΠ4</RoadBadge>
    <RoadBadge x={715} y={1739} w={102} bg="#eef0c4" line="#cdd08c" ink="#55572d">ΕΠ7</RoadBadge>

    <path d="M1318 956 1353 985 1318 1042 1283 985Z" fill="#f00" stroke="#111" strokeWidth="3.5" />
    <circle cx="1318" cy="988" r="8" fill="#111" />
  </svg>
);

/* ---------- scrollbar ---------- */

const Up = ({ tone }: { tone: string }) => (
  <svg className={`mx-auto h-[5px] w-[9px] shrink-0 ${tone}`} viewBox="0 0 9 5"><path d="M4.5 0 9 5H0z" fill="currentColor" /></svg>
);
const Down = ({ tone }: { tone: string }) => (
  <svg className={`mx-auto h-[5px] w-[9px] shrink-0 ${tone}`} viewBox="0 0 9 5"><path d="M0 0H9L4.5 5z" fill="currentColor" /></svg>
);

const Scrollbar = () => (
  <aside className="flex h-[2392px] w-[21px] shrink-0 flex-col bg-[#f0f0f0]">
    <div className="h-[9px] shrink-0" />
    <Up tone="text-[#a0a0a0]" />
    <div className="mx-auto mt-[7px] h-[354px] w-[17px] shrink-0 bg-[#c0c0c0]" />
    <div className="h-[553px] shrink-0" />
    <Down tone="text-[#505050]" />
    <div className="h-[18px] shrink-0" />
    <Up tone="text-[#505050]" />
    <div className="mx-auto mt-[361px] h-[354px] w-[17px] shrink-0 bg-[#c0c0c0]" />
    <div className="h-[199px] shrink-0" />
    <Down tone="text-[#505050]" />
    <div className="mx-auto mt-[142px] h-[354px] w-[17px] shrink-0 bg-[#c0c0c0]" />
    <div className="h-[7px] shrink-0" />
    <Down tone="text-[#a0a0a0]" />
  </aside>
);

/* Brush-style heading: heavy italic letters with slightly uneven edges. */
const BrushTitle = () => (
  <svg
    className="h-[100px] w-[340px] shrink-0 overflow-visible"
    viewBox="0 0 340 100"
    fontFamily="Lato, sans-serif"
    fontStyle="italic"
    fontWeight="900"
    fontSize="75"
    fill="#5f9ea0"
    stroke="#5f9ea0"
    strokeWidth="3"
    strokeLinejoin="round"
  >
    <defs>
      <filter id="rough" x="-5%" y="-10%" width="110%" height="130%">
        <feTurbulence type="fractalNoise" baseFrequency="0.05" numOctaves="1" seed="4" result="n" />
        <feDisplacementMap in="SourceGraphic" in2="n" scale="9" xChannelSelector="R" yChannelSelector="G" />
      </filter>
    </defs>
    <g filter="url(#rough)">
      <text x="8" y="72" textLength="324" lengthAdjust="spacingAndGlyphs">Register User</text>
    </g>
  </svg>
);

/* ---------- page ---------- */

export default function App() {
  return (
    <div className="flex h-[2392px] w-[1920px] overflow-hidden bg-white font-['Liberation_Serif',serif]">
      <main className="flex w-[1899px] shrink-0 flex-col items-center">
        <header className="flex h-[222px] w-full shrink-0 flex-col items-center bg-black pt-[29px]">
          <BrushTitle />
          <div className="flex h-[63px] w-[63px] shrink-0 items-center justify-center rounded-full bg-[#5f9ea0]">
            <svg className="h-[34px] w-[24px]" viewBox="0 0 24 34" fill="none" stroke="#000" strokeWidth="2.5" strokeLinecap="round" strokeLinejoin="round">
              <path d="M12 1.5V32M2 22.5 12 32.3 22 22.5" />
            </svg>
          </div>
        </header>

        <form className="mt-[125px] flex h-[1126px] w-[1139px] shrink-0 flex-col rounded-[190px] bg-[#5f9ea0]" onSubmit={(e) => e.preventDefault()}>
          <h1 className="mt-[62px] h-[48px] text-center text-[40px] leading-[48px] font-bold text-white">ΕΓΓΡΑΦΗ</h1>
          <div className="mt-[62px] flex pl-[125px]">
            <div className="flex w-[597px] shrink-0 flex-col items-start">
              <div className="h-[92px]"><Label>Username:</Label><TextBox /></div>
              <div className="h-[93px]"><Label>E-mail:</Label><TextBox /></div>
              <div className="h-[103px]">
                <Label>Password:</Label>
                <div className="flex h-[37px] items-center gap-[6px]">
                  <div className="-mt-[2px]"><TextBox /></div>
                  <NavyButton size="h-[37px] w-[137px] text-[16.6px]">Show Password</NavyButton>
                  <NavyButton size="h-[37px] w-[193px] text-[16.6px]">See Password Strength</NavyButton>
                </div>
              </div>
              <div className="h-[92px]"><Label>Επιβεβαιωση Password:</Label><TextBox /></div>
              <div className="h-[90px]"><Label>Τυπος χρηστη:</Label><SelectBox value="Απλος" size="h-[25px] w-[92px] text-[18.6px]" /></div>
              <div className="h-[93px]"><Label>Ονομα:</Label><TextBox /></div>
              <div className="h-[92px]"><Label>Επωνυμο:</Label><TextBox /></div>
              <div className="h-[98px]">
                <Label>Ημερομηνια Γεννησης:</Label>
                <div className="flex h-[33px] w-[184px] items-center justify-between rounded-[1px] border border-[#767676] bg-white pr-[7px] pl-[4px]">
                  <span className="pb-[1px] font-['Liberation_Mono',monospace] text-[18.5px] tracking-[0.7px] text-[#444]">01/01/1980</span>
                  <svg className="mb-[1px] h-[20px] w-[20px]" viewBox="0 0 20 20">
                    <path d="M3 0H5.5V2H14.5V0H17V2H18.5Q20 2 20 3.5V18.5Q20 20 18.5 20H1.5Q0 20 0 18.5V3.5Q0 2 1.5 2H3ZM2 7V18H18V7Z" fill="#000" />
                  </svg>
                </div>
              </div>
              <div className="flex h-[66px] items-start text-[25px] leading-7 text-white">
                <span className="w-[69px]">Φυλο:</span>
                <span>Male</span><Radio name="sex" gap="mt-[6px] ml-[7px] mr-[8px]" />
                <span>Female</span><Radio name="sex" gap="mt-[6px] ml-[6px] mr-[8px]" />
                <span>Other</span><Radio name="sex" gap="mt-[6px] ml-[6px]" />
              </div>
              <button className="h-[54px] w-[103px] bg-[#16425b] font-['Liberation_Sans',sans-serif] text-[25px] text-white">Submit</button>
            </div>

            <div className="flex flex-col items-start">
              <div className="h-[92px]"><Label>ΑΜΚΑ:</Label><TextBox /></div>
              <div className="h-[91px]"><Label>Χωρα:</Label><SelectBox value="Greece" size="h-[26px] w-[284px] text-[18.6px]" /></div>
              <div className="h-[93px]"><Label>Πολη:</Label><TextBox /></div>
              <div className="h-[124px]">
                <Label>Διευθυνση Οικιας:</Label>
                <div className="mt-[2px] flex gap-[25px]">
                  <TextBox />
                  <NavyButton size="h-[27px] w-[96px] text-[18.6px]">Check</NavyButton>
                </div>
                <NavyButton size="mt-[1px] h-[30px] w-[186px] text-[18.6px]">Σημπληρωση Πεδιων</NavyButton>
              </div>
              <div className="h-[93px]"><Label>Τηλεφωνο:</Label><TextBox /></div>
              <div className="h-[99px]"><Label>Υψος Σε Εκατοστα:</Label><TextBox size="h-[34px] w-[117px]" /></div>
              <div className="h-[93px]"><Label>Βαρος:</Label><TextBox size="h-[27px] w-[121px]" placeholder="20.00" /></div>
              <div className="h-[93px]">
                <Label>Εθελοντης Αιμοδοτης:</Label>
                <div className="flex text-[25px] leading-7 text-white">
                  <span>Ναι</span><Radio name="donor" gap="mt-[6px] ml-[7px] mr-[8px]" />
                  <span>Οχι</span><Radio name="donor" gap="mt-[6px] ml-[7px]" />
                </div>
              </div>
              <div className="flex h-[66px] items-start gap-[6px]"><Label>Ομαδα Αιματος:</Label><SelectBox value="A-" size="mt-[5px] h-[24px] w-[100px] text-[16.6px]" /></div>
              <div className="flex items-start gap-[14px]">
                <Label>Συμφωνία με όρους χρήσης :</Label>
                <input type="checkbox" className="mt-[6px] block h-[14px] w-[14px] appearance-none rounded-[2.5px] border border-[#767676] bg-white" />
              </div>
            </div>
          </div>
        </form>

        <section className="relative mt-[125px] h-[757px] w-[883px] shrink-0 border-[3px] border-black bg-white p-[1px]">
          <CityMap />
          <div className="absolute top-[11px] left-[11px] flex h-[63px] w-[35px] flex-col gap-px rounded-[4px] bg-white/40 px-[4px] py-[3px]">
            <button className="flex h-[28px] items-center justify-center rounded-t-[3px] bg-[#6790bb]">
              <svg className="mb-[2px] h-4 w-4" viewBox="0 0 16 16" stroke="#fff" strokeWidth="3.6"><path d="M0 8H16M8 0V15" /></svg>
            </button>
            <button className="flex h-[28px] items-center justify-center rounded-b-[3px] bg-[#6790bb]">
              <svg className="mb-[2px] h-4 w-4" viewBox="0 0 16 16" stroke="#fff" strokeWidth="3.4"><path d="M0 7.5H16" /></svg>
            </button>
          </div>
          <p className="absolute right-[5px] bottom-[76px] text-[16.6px] leading-5 whitespace-nowrap text-black">
            © <a className="text-[#0000ee] underline" href="#map">OpenStreetMap</a> contributors
          </p>
        </section>
      </main>
      <Scrollbar />
    </div>
  );
}
